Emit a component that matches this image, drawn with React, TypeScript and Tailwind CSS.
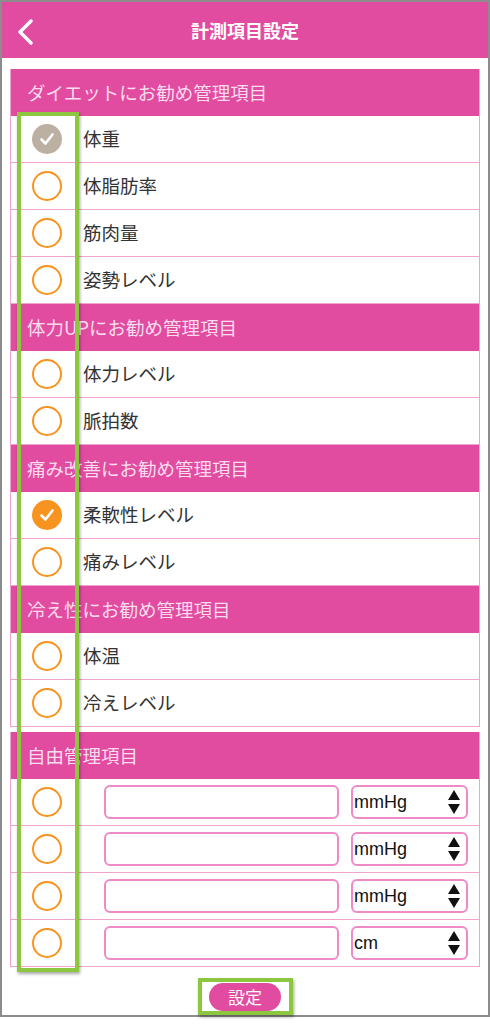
import React from "react";

const PINK = "bg-[#e14ca0]";

type Item = { label: string; state: "none" | "gray" | "orange" };
type Section = { title: string; items: Item[] };

const sections: Section[] = [
  {
    title: "ダイエットにお勧め管理項目",
    items: [
      { label: "体重", state: "gray" },
      { label: "体脂肪率", state: "none" },
      { label: "筋肉量", state: "none" },
      { label: "姿勢レベル", state: "none" },
    ],
  },
  {
    title: "体力UPにお勧め管理項目",
    items: [
      { label: "体力レベル", state: "none" },
      { label: "脈拍数", state: "none" },
    ],
  },
  {
    title: "痛み改善にお勧め管理項目",
    items: [
      { label: "柔軟性レベル", state: "orange" },
      { label: "痛みレベル", state: "none" },
    ],
  },
  {
    title: "冷え性にお勧め管理項目",
    items: [
      { label: "体温", state: "none" },
      { label: "冷えレベル", state: "none" },
    ],
  },
];

const units = ["mmHg", "mmHg", "mmHg", "cm"];

function Circle({ state }: { state: Item["state"] }) {
  if (state === "none") {
    return (
      <div className="w-[30px] h-[30px] rounded-full border-2 border-[#f7931e] bg-white" />
    );
  }
  const bg = state === "gray" ? "bg-[#bcb0a2]" : "bg-[#f7931e]";
  return (
    <div className={`w-[30px] h-[30px] rounded-full ${bg} flex items-center justify-center`}>
      <svg width="18" height="18" viewBox="0 0 18 18">
        <path d="M3.5 9.5 L7.5 13.5 L14.5 4.5" fill="none" stroke="white" strokeWidth="2.6" strokeLinecap="round" strokeLinejoin="round" />
      </svg>
    </div>
  );
}

function SectionHeader({ title }: { title: string }) {
  return (
    <div className={`h-[47px] ${PINK} flex items-center pl-[16px] text-[18.5px] text-[#fbdcee]`}>
      {title}
    </div>
  );
}

function Row({ item }: { item: Item }) {
  return (
    <div className="h-[47px] bg-white border-b border-[#f0a3cf] flex items-center">
      <div className="w-[72px] flex justify-center">
        <Circle state={item.state} />
      </div>
      <span className="text-[18.5px] text-[#333333]">{item.label}</span>
    </div>
  );
}

function UpDown() {
  return (
    <svg width="14" height="26" viewBox="0 0 14 26">
      <path d="M7 1 L13 11 L1 11 Z" fill="#111" />
      <path d="M1 15 L13 15 L7 25 Z" fill="#111" />
    </svg>
  );
}

function FreeRow({ unit }: { unit: string }) {
  return (
    <div className="h-[47px] bg-white border-b border-[#f0a3cf] flex items-center">
      <div className="w-[72px] flex justify-center">
        <Circle state="none" />
      </div>
      <div className="ml-[21px] w-[235px] h-[34px] rounded-[6px] border-2 border-[#ee8ac6] bg-white" />
      <div className="ml-[12px] w-[117px] h-[34px] rounded-[6px] border-2 border-[#ee8ac6] bg-white flex items-center justify-between pl-[1px] pr-[5px]">
        <span className="text-[18px] text-[#111] font-['Liberation_Sans',Arial,sans-serif]">{unit}</span>
        <UpDown />
      </div>
    </div>
  );
}

export default function App() {
  return (
    <div className="w-[490px] h-[1024px] bg-white relative font-['Noto_Sans_CJK_JP','Noto_Sans',sans-serif]">
      <div className="w-[490px] h-[1017px] border-2 border-[#8c8c8c] flex flex-col bg-white">
        <div className={`h-[56px] ${PINK} flex items-center relative shrink-0`}>
          <svg className="absolute left-[14px] top-[17px]" width="20" height="26" viewBox="0 0 20 26">
            <path d="M15 2 L4 13 L15 24" fill="none" stroke="white" strokeWidth="3.4" strokeLinecap="round" strokeLinejoin="round" />
          </svg>
          <div className="w-full text-center text-white font-bold text-[18px]">計測項目設定</div>
        </div>
        <div className="px-[8px] pt-[11px]">
          <div className="border-l border-r border-[#f0a3cf]">
            {sections.map((s) => (
              <div key={s.title}>
                <SectionHeader title={s.title} />
                {s.items.map((it) => (
                  <Row key={it.label} item={it} />
                ))}
              </div>
            ))}
          </div>
          <div className="mt-[5px] border-l border-r border-[#f0a3cf]">
            <SectionHeader title="自由管理項目" />
            {units.map((u, i) => (
              <FreeRow key={i} unit={u} />
            ))}
          </div>
          <div className="flex justify-center mt-[16px]">
            <div className={`w-[72px] h-[28px] rounded-full ${PINK} text-white text-[17px] flex items-center justify-center`}>
              設定
            </div>
          </div>
        </div>
      </div>
      {/* annotation boxes */}
      <div className="absolute left-[17px] top-[112px] w-[62px] h-[860px] border-[4px] border-[#8dc63f] shadow-[1px_2px_3px_rgba(0,0,0,0.35)]" />
      <div className="absolute left-[198px] top-[978px] w-[95px] h-[37px] border-[4px] border-[#8dc63f] shadow-[1px_2px_3px_rgba(0,0,0,0.35)]" />
    </div>
  );
}
